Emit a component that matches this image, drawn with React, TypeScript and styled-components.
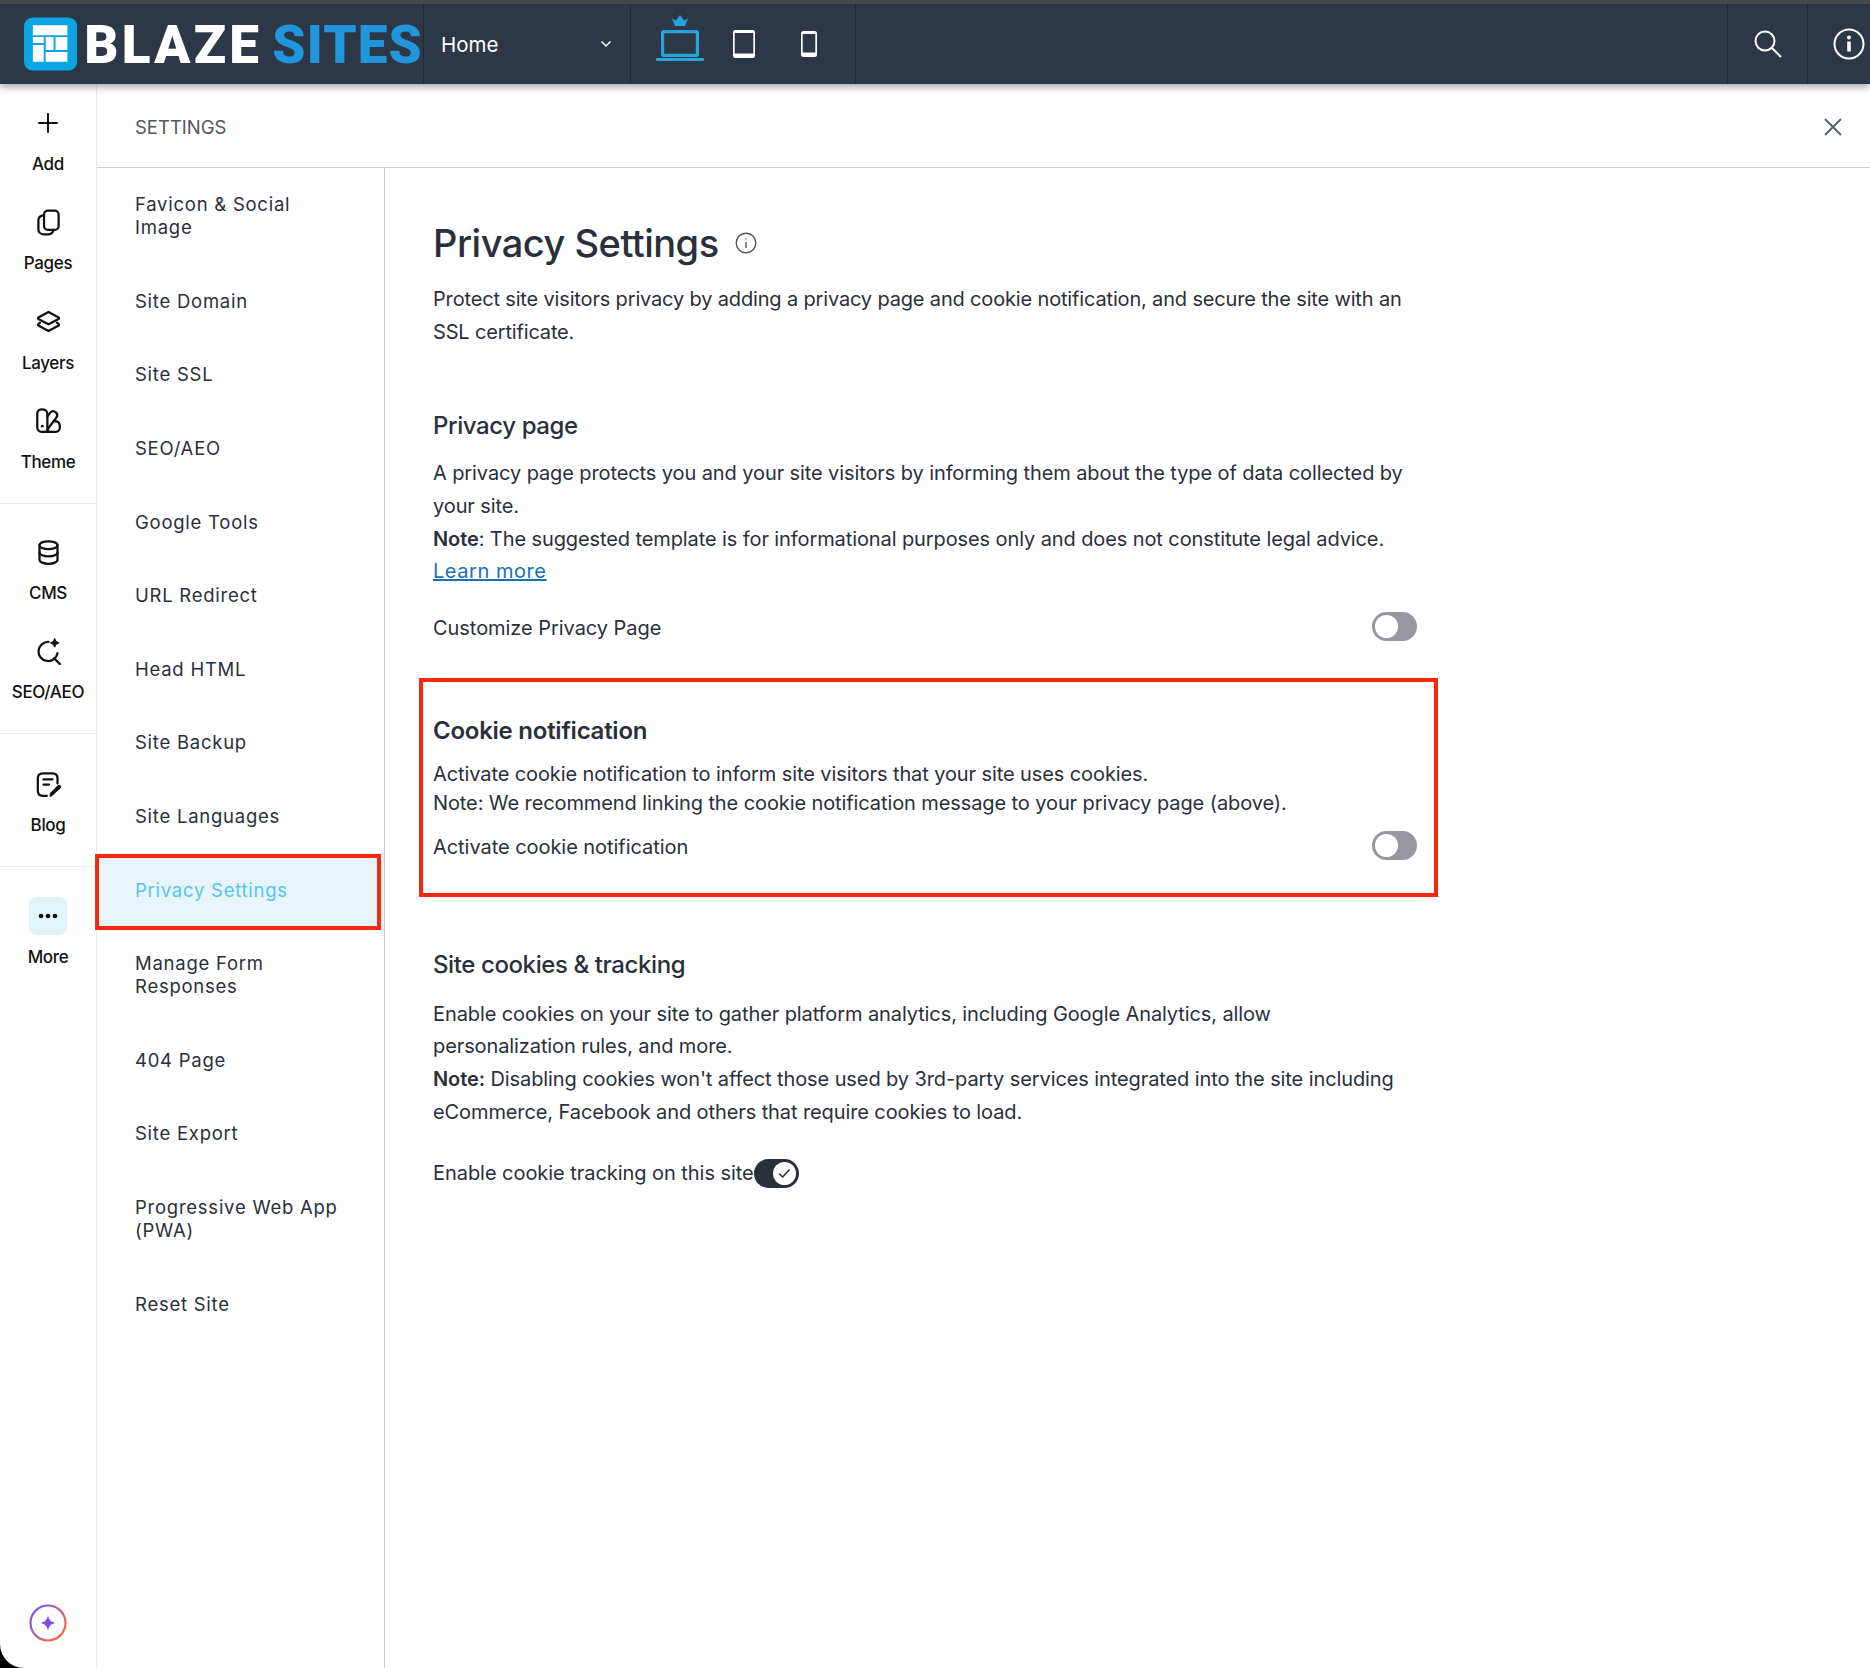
import React from 'react';
import styled, { createGlobalStyle } from 'styled-components';

const GlobalStyle = createGlobalStyle`
  html, body {
    margin: 0;
    padding: 0;
    background: #000;
    font-family: Inter, "Noto Sans", sans-serif;
    color: #2a2f3c;
  }
  * { box-sizing: border-box; }
`;

const Shell = styled.div`
  width: 1870px;
  height: 1668px;
  background: #fff;
  border-bottom-left-radius: 24px;
  display: flex;
  flex-direction: column;
  overflow: hidden;
`;

const Header = styled.header`
  height: 84px;
  flex: none;
  display: flex;
  align-items: stretch;
  background: #2c3748;
  border-top: 4px solid #45474a;
  box-shadow: 0 3px 8px rgba(0, 0, 0, 0.35);
  position: relative;
  z-index: 2;
`;

const HeaderCell = styled.div<{ $w?: number }>`
  width: ${p => (p.$w ? `${p.$w}px` : 'auto')};
  flex: ${p => (p.$w ? 'none' : '1')};
  display: flex;
  align-items: center;
  border-right: 1px solid #1f2836;
`;

const LogoCell = styled(HeaderCell)`
  padding-left: 24px;
  gap: 7px;
`;

const LogoText = styled.div`
  padding-top: 2px;
  white-space: nowrap;
`;

const LogoWord = styled.span<{ $blue?: boolean }>`
  font-family: Roboto, "Liberation Sans", sans-serif;
  font-weight: 900;
  font-size: 53px;
  line-height: 54px;
  letter-spacing: ${p => (p.$blue ? '1.2px' : '3.3px')};
  color: ${p => (p.$blue ? '#2196dc' : '#fff')};
  margin-left: ${p => (p.$blue ? '10px' : '0')};
`;

const PageSelect = styled(HeaderCell)`
  justify-content: space-between;
  padding: 0 18px 0 17px;
  color: #fff;
  font-size: 20.5px;
`;

const Devices = styled(HeaderCell)`
  padding-left: 25px;
`;

const DeviceSlot = styled.div<{ $w: number; $gap: number; $raise?: number }>`
  width: ${p => p.$w}px;
  margin-right: ${p => p.$gap}px;
  margin-bottom: ${p => p.$raise ?? 0}px;
  display: flex;
  justify-content: center;
`;

const IconCell = styled(HeaderCell)`
  justify-content: center;
  border-right: none;
`;

const InfoCell = styled(HeaderCell)`
  padding-left: 25px;
  border-right: none;
  border-left: 1px solid #1f2836;
`;

const Body = styled.div`
  flex: 1;
  display: flex;
  min-height: 0;
`;

const Rail = styled.nav`
  width: 97px;
  flex: none;
  display: flex;
  flex-direction: column;
  border-right: 1px solid #ececee;
  position: relative;
`;

const RailGroup = styled.div<{ $last?: boolean; $h: number; $pt: number }>`
  height: ${p => p.$h}px;
  flex: none;
  padding-top: ${p => p.$pt}px;
  border-bottom: ${p => (p.$last ? 'none' : '1px solid #ececee')};
`;

const RailItem = styled.div`
  height: 99.3px;
  display: flex;
  flex-direction: column;
  align-items: center;
  color: #111;
  font-size: 17px;
  font-weight: 500;
  letter-spacing: -0.35px;
`;

const RailIcon = styled.div<{ $active?: boolean }>`
  width: 38px;
  height: 38px;
  border-radius: 8px;
  display: flex;
  align-items: center;
  justify-content: center;
  background: ${p => (p.$active ? '#dff4fb' : 'transparent')};
  color: #111;
`;

const RailLabel = styled.div`
  margin-top: 11px;
  line-height: 22px;
  white-space: nowrap;
`;

const AiButton = styled.div`
  position: absolute;
  left: 29px;
  bottom: 26px;
  width: 38px;
  height: 38px;
`;

const Panel = styled.div`
  flex: 1;
  display: flex;
  flex-direction: column;
  min-width: 0;
`;

const PanelHead = styled.div`
  height: 84px;
  flex: none;
  display: flex;
  align-items: center;
  justify-content: space-between;
  padding: 2px 28px 0 38px;
  border-bottom: 1px solid #c9d0d3;
  font-size: 18.5px;
  color: #54565f;
`;

const PanelBody = styled.div`
  flex: 1;
  display: flex;
  min-height: 0;
`;

const Menu = styled.aside`
  width: 288px;
  flex: none;
  border-right: 1px solid #c5d0d8;
`;

const MenuItem = styled.div<{ $active?: boolean }>`
  padding: 25.3px 40px 25.3px 38px;
  font-size: 18.5px;
  line-height: 23px;
  letter-spacing: 0.75px;
  position: relative;
  color: ${p => (p.$active ? '#54c5ef' : '#2a2f3c')};
  background: ${p => (p.$active ? '#e7f5fb' : 'transparent')};
  ${p =>
    p.$active &&
    `
    &::after {
      content: '';
      position: absolute;
      left: -2px;
      right: 3px;
      top: 1px;
      bottom: -3px;
      border: 4px solid #f52a0c;
    }
  `}
`;

const Content = styled.main`
  flex: 1;
  padding: 52px 0 0 48px;
`;

const Column = styled.div`
  width: 984px;
`;

const Title = styled.h1`
  margin: 0;
  display: flex;
  align-items: center;
  gap: 16px;
  font-size: 38px;
  line-height: 46px;
  font-weight: 500;
  letter-spacing: -0.5px;
  color: #2a2f3c;
`;

const Paragraph = styled.p<{ $lh?: number; $mt?: number; $tight?: boolean }>`
  margin: ${p => p.$mt ?? 0}px 0 0;
  max-width: 975px;
  font-size: 20px;
  line-height: ${p => p.$lh ?? 32.8}px;
  letter-spacing: ${p => (p.$tight ? '-0.16px' : '-0.1px')};
  color: #2a2f3c;
  a {
    color: #1a6fb5;
    letter-spacing: 0.55px;
  }
  b {
    font-weight: 600;
  }
`;

const Section = styled.section<{ $pt: number; $h: number; $line?: boolean }>`
  height: ${p => p.$h}px;
  padding-top: ${p => p.$pt}px;
  position: relative;
  border-bottom: ${p => (p.$line ? '1px solid #e3e5e7' : 'none')};
`;

const Highlight = styled.div`
  position: absolute;
  left: -14px;
  right: -21px;
  top: -3px;
  bottom: 3px;
  border: 4px solid #f52a0c;
`;

const Heading = styled.h2<{ $strong?: boolean }>`
  margin: 0;
  font-size: 24px;
  line-height: 30px;
  font-weight: ${p => (p.$strong ? 600 : 500)};
  letter-spacing: ${p => (p.$strong ? '-0.25px' : '-0.4px')};
  color: #2a2f3c;
`;

const ToggleRow = styled.div<{ $mt: number }>`
  margin-top: ${p => p.$mt}px;
  display: flex;
  align-items: center;
  justify-content: space-between;
  font-size: 20px;
  letter-spacing: -0.05px;
  line-height: 29px;
`;

const ToggleLabel = styled.span`
  padding-top: 2.5px;
  margin-bottom: -2.5px;
`;

const InlineToggleRow = styled(ToggleRow)`
  justify-content: flex-start;
`;

const Toggle = styled.div<{ $on?: boolean }>`
  width: 45px;
  height: 29px;
  border-radius: 15px;
  background: ${p => (p.$on ? '#2a2f3c' : '#97989f')};
  position: relative;
  flex: none;
  &::after {
    content: '';
    position: absolute;
    top: 3px;
    left: ${p => (p.$on ? '19px' : '3px')};
    width: 23px;
    height: 23px;
    border-radius: 50%;
    background: #fff;
  }
`;

const ToggleCheck = styled.svg`
  position: absolute;
  left: 24px;
  top: 8px;
  z-index: 1;
`;

const menuItems = [
  'Favicon & Social Image',
  'Site Domain',
  'Site SSL',
  'SEO/AEO',
  'Google Tools',
  'URL Redirect',
  'Head HTML',
  'Site Backup',
  'Site Languages',
  'Privacy Settings',
  'Manage Form Responses',
  '404 Page',
  'Site Export',
  'Progressive Web App (PWA)',
  'Reset Site',
];

const stroke = {
  fill: 'none',
  stroke: 'currentColor',
  strokeWidth: 2,
  strokeLinecap: 'round' as const,
  strokeLinejoin: 'round' as const,
};

const AddIcon = () => (
  <svg width="24" height="24" viewBox="0 0 24 24" {...stroke}>
    <path d="M12 3v18M3 12h18" />
  </svg>
);

const PagesIcon = () => (
  <svg width="27" height="27" viewBox="0 0 24 24" {...stroke}>
    <rect x="8" y="1.500" width="13" height="17" rx="3.500" />
    <path d="M8 5.500C5 6 3 7.500 3 10v8c0 2.500 1.800 4.500 4.500 4.500H12c2.500 0 4-1.500 4.500-4" />
  </svg>
);

const LayersIcon = () => (
  <svg width="27" height="27" viewBox="0 0 24 24" {...stroke}>
    <path d="M12 3.500 21 8.500c.5.400.5 1 0 1.300l-9 4.700-9-4.700c-.5-.3-.5-.9 0-1.300z" />
    <path d="M4.500 13 3 14.300c-.5.400-.5 1 0 1.300l9 4.900 9-4.900c.5-.3.500-.9 0-1.300L19.500 13" />
  </svg>
);

const ThemeIcon = () => (
  <svg width="27" height="27" viewBox="0 0 24 24" {...stroke}>
    <path d="M2 6c0-2.500 2-4 4.200-4S11 3.500 11 6v13.500c0 1.500 1 2.500 2 2.500H6c-2.500 0-4-1.800-4-4z" />
    <path d="M11 8.500 13.500 5c1.500-1.800 3.500-1.500 5-.3 1.500 1.300 1.500 3.300.5 4.800L11 20" />
    <path d="M16.500 12.500h.5c3 0 5 1.500 5 4v2c0 2-1.500 3.500-3.500 3.500H8" />
    <circle cx="6.500" cy="17" r="1.300" fill="currentColor" stroke="none" />
  </svg>
);

const CmsIcon = () => (
  <svg width="27" height="27" viewBox="0 0 24 24" {...stroke}>
    <ellipse cx="12" cy="5.500" rx="8" ry="3.500" />
    <path d="M4 5.500v13c0 2 3.600 3.500 8 3.500s8-1.500 8-3.500v-13" />
    <path d="M4 12c0 2 3.600 3.500 8 3.500s8-1.500 8-3.500" />
  </svg>
);

const SeoIcon = () => (
  <svg width="27" height="27" viewBox="0 0 24 24" {...stroke}>
    <path d="M12 3.500a8.500 8.500 0 1 0 8 10" />
    <path d="m17 18 5 5" />
    <path d="M17.500.5c.4 2.400 1.200 3.300 3.500 3.800-2.300.5-3.100 1.400-3.500 3.700-.4-2.300-1.200-3.200-3.500-3.700 2.300-.5 3.100-1.400 3.500-3.800z" fill="currentColor" strokeWidth="1" />
  </svg>
);

const BlogIcon = () => (
  <svg width="27" height="27" viewBox="0 0 24 24" {...stroke}>
    <path d="M10.500 22H7c-3 0-4.500-1.500-4.500-4.500V6.500C2.500 3.500 4 2 7 2h8.500c3 0 4.500 1.500 4.500 4.500V11" />
    <path d="M7.500 7.500h8M7.500 12h5" />
    <path d="m14.500 22-1 .3.300-2.300 7-7c1-.7 2.500.8 1.700 1.700z" fill="currentColor" strokeWidth="1.200" />
  </svg>
);

const MoreIcon = () => (
  <svg width="22" height="6" viewBox="0 0 22 6" fill="currentColor">
    <circle cx="4" cy="3" r="2.300" />
    <circle cx="11" cy="3" r="2.300" />
    <circle cx="18" cy="3" r="2.300" />
  </svg>
);

const Toggler = ({ on }: { on?: boolean }) => (
  <Toggle $on={on}>
    {on && (
      <ToggleCheck width="13" height="13" viewBox="0 0 13 13" fill="none" stroke="#2a2f3c" strokeWidth="1.600" strokeLinecap="round" strokeLinejoin="round">
        <path d="m1.500 7 3.200 3 6.500-7" />
      </ToggleCheck>
    )}
  </Toggle>
);

const railGroups = [
  { h: 420, pt: 20, items: [['Add', AddIcon], ['Pages', PagesIcon], ['Layers', LayersIcon], ['Theme', ThemeIcon]] },
  { h: 230, pt: 29, items: [['CMS', CmsIcon], ['SEO/AEO', SeoIcon]] },
  { h: 133, pt: 31, items: [['Blog', BlogIcon]] },
] as const;

export default function App() {
  return (
    <Shell>
      <GlobalStyle />
      <Header>
        <LogoCell $w={424}>
          <svg width="54" height="54" viewBox="0 0 54 54">
            <rect width="54" height="54" rx="9" fill="#0ba5e3" />
            <path d="M9 8h35v10H9zM9 20h11v6H9zM9 28h11v17H9zM22 20h8v13h-8zM32 20h12v13H32zM22 35h22v10H22z" fill="#fff" />
          </svg>
          <LogoText>
            <LogoWord>BLAZE</LogoWord>
            <LogoWord $blue>SITES</LogoWord>
          </LogoText>
        </LogoCell>
        <PageSelect $w={207}>
          <span>Home</span>
          <svg width="12" height="8" viewBox="0 0 12 8" fill="none" stroke="#fff" strokeWidth="1.500">
            <path d="m1.500 1.500 4.500 4.500 4.500-4.500" />
          </svg>
        </PageSelect>
        <Devices $w={225}>
          <DeviceSlot $w={48} $gap={29} $raise={12}>
            <svg width="48" height="46" viewBox="0 0 48 46" fill="none">
              <path d="M19 11 16 3.500l4 2L24 0l4 5.500 4-2L29 11z" fill="#25a5d9" />
              <rect x="6.600" y="16.600" width="34.800" height="23.800" rx="1.500" stroke="#25a5d9" strokeWidth="3.200" />
              <rect x="0" y="43" width="48" height="3" rx="1" fill="#25a5d9" />
            </svg>
          </DeviceSlot>
          <DeviceSlot $w={22} $gap={46}>
            <svg width="22" height="28" viewBox="0 0 22 28">
              <rect width="22" height="28" rx="2.500" fill="#fff" />
              <rect x="1.700" y="3" width="18.600" height="20.500" fill="#2c3748" />
            </svg>
          </DeviceSlot>
          <DeviceSlot $w={16} $gap={0}>
            <svg width="16" height="26" viewBox="0 0 16 26">
              <rect width="16" height="26" rx="2.500" fill="#fff" />
              <rect x="1.700" y="3" width="12.600" height="18.500" fill="#2c3748" />
            </svg>
          </DeviceSlot>
        </Devices>
        <HeaderCell />
        <IconCell $w={79}>
          <svg width="28" height="28" viewBox="0 0 28 28" fill="none" stroke="#fff" strokeWidth="2">
            <circle cx="11" cy="11" r="9.500" />
            <path d="m18 18 9 9" />
          </svg>
        </IconCell>
        <InfoCell $w={63}>
          <svg width="32" height="32" viewBox="0 0 32 32" fill="none">
            <circle cx="16" cy="16" r="14.500" stroke="#fff" strokeWidth="2" />
            <circle cx="16" cy="9.500" r="2" fill="#fff" />
            <rect x="14.200" y="13.500" width="3.600" height="10" fill="#fff" />
          </svg>
        </InfoCell>
      </Header>
      <Body>
        <Rail>
          {railGroups.map(group => (
            <RailGroup key={group.items[0][0]} $h={group.h} $pt={group.pt}>
              {group.items.map(([label, Icon]) => (
                <RailItem key={label}>
                  <RailIcon>
                    <Icon />
                  </RailIcon>
                  <RailLabel>{label}</RailLabel>
                </RailItem>
              ))}
            </RailGroup>
          ))}
          <RailGroup $last $h={120} $pt={30}>
            <RailItem>
              <RailIcon $active>
                <MoreIcon />
              </RailIcon>
              <RailLabel>More</RailLabel>
            </RailItem>
          </RailGroup>
          <AiButton>
            <svg width="38" height="38" viewBox="0 0 38 38" fill="none">
              <defs>
                <linearGradient id="aiRing" x1="0.100" y1="0.100" x2="0.900" y2="0.900">
                  <stop offset="0" stopColor="#7c55ea" />
                  <stop offset="1" stopColor="#fb6b3d" />
                </linearGradient>
              </defs>
              <circle cx="19" cy="19" r="17.500" stroke="url(#aiRing)" strokeWidth="2.200" />
              <path d="M19 11c.8 5 3 7.200 8 8-5 .8-7.200 3-8 8-.8-5-3-7.200-8-8 5-.8 7.200-3 8-8z" fill="#7a4fe0" />
            </svg>
          </AiButton>
        </Rail>
        <Panel>
          <PanelHead>
            <span>SETTINGS</span>
            <svg width="18" height="18" viewBox="0 0 18 18" fill="none" stroke="#54656f" strokeWidth="2">
              <path d="m1 1 16 16M17 1 1 17" />
            </svg>
          </PanelHead>
          <PanelBody>
            <Menu>
              {menuItems.map(item => (
                <MenuItem key={item} $active={item === 'Privacy Settings'}>
                  {item}
                </MenuItem>
              ))}
            </Menu>
            <Content>
              <Column>
                <Title>
                  Privacy Settings
                  <svg width="22" height="22" viewBox="0 0 22 22" fill="none" stroke="#54565f" strokeWidth="1.400">
                    <circle cx="11" cy="11" r="9.800" />
                    <path d="M11 10v6M11 6.500v1" />
                  </svg>
                </Title>
                <Paragraph $mt={17} $tight>
                  Protect site visitors privacy by adding a privacy page and cookie notification, and secure the site with an SSL certificate.
                </Paragraph>
                <Section $pt={62} $h={332} $line>
                  <Heading>Privacy page</Heading>
                  <Paragraph $mt={16.5}>
                    A privacy page protects you and your site visitors by informing them about the type of data collected by your site.
                    <br />
                    <b>Note</b>: The suggested template is for informational purposes only and does not constitute legal advice.
                    <br />
                    <a href="#learn">Learn more</a>
                  </Paragraph>
                  <ToggleRow $mt={23.5}>
                    <ToggleLabel>Customize Privacy Page</ToggleLabel>
                    <Toggler />
                  </ToggleRow>
                </Section>
                <Section $pt={35} $h={220} $line>
                  <Heading $strong>Cookie notification</Heading>
                  <Paragraph $lh={29} $mt={14.5}>
                    Activate cookie notification to inform site visitors that your site uses cookies.
                    <br />
                    Note: We recommend linking the cookie notification message to your privacy page (above).
                  </Paragraph>
                  <ToggleRow $mt={12.6}>
                    <ToggleLabel>Activate cookie notification</ToggleLabel>
                    <Toggler />
                  </ToggleRow>
                  <Highlight />
                </Section>
                <Section $pt={49} $h={320}>
                  <Heading>Site cookies &amp; tracking</Heading>
                  <Paragraph $mt={18}>
                    Enable cookies on your site to gather platform analytics, including Google Analytics, allow personalization rules, and more.
                    <br />
                    <b>Note:</b> Disabling cookies won't affect those used by 3rd-party services integrated into the site including eCommerce, Facebook and others that require cookies to load.
                  </Paragraph>
                  <InlineToggleRow $mt={30.4}>
                    Enable cookie tracking on this site
                    <Toggler on />
                  </InlineToggleRow>
                </Section>
              </Column>
            </Content>
          </PanelBody>
        </Panel>
      </Body>
    </Shell>
  );
}
